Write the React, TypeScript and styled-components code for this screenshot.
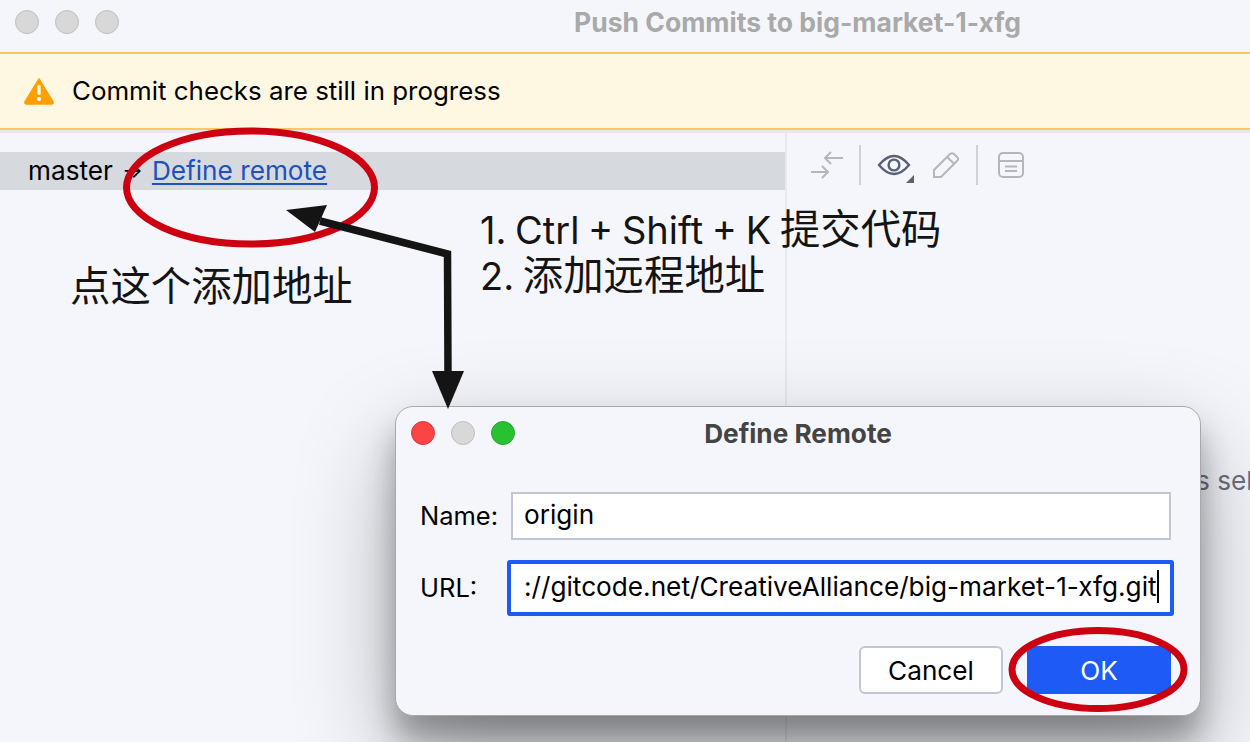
import styled, { createGlobalStyle } from "styled-components";

const GlobalStyle = createGlobalStyle`
  html, body {
    margin: 0;
    padding: 0;
    background: #f5f6fb;
  }
  * {
    box-sizing: border-box;
  }
`;

const App = () => {
  return (
    <>
      <GlobalStyle />
      <Page>
        <TitleBar>
          <Lights>
            <Light />
            <Light />
            <Light />
          </Lights>
          <WindowTitle>Push Commits to big-market-1-xfg</WindowTitle>
        </TitleBar>
        <Banner>
          <svg width="32" height="28" viewBox="0 0 32 28">
            <path
              d="M16 2 L30 25 Q30.5 27 28.5 27 L3.5 27 Q1.5 27 2 25 Z"
              fill="#ff9f00"
              stroke="#ff9f00"
              strokeWidth="1.5"
              strokeLinejoin="round"
            />
            <rect x="14.4" y="8" width="3.2" height="10" rx="1.4" fill="#fff" />
            <circle cx="16" cy="22" r="2" fill="#fff" />
          </svg>
          <BannerText>Commit checks are still in progress</BannerText>
        </Banner>
        <Strip />
        <Body>
          <BranchPanel>
            <BranchRow>
              <span>master</span>
              <BranchArrow>→</BranchArrow>
              <RemoteLink>Define remote</RemoteLink>
            </BranchRow>
          </BranchPanel>
          <DetailPanel>
            <Toolbar>
              <svg width="34" height="34" viewBox="0 0 34 34" fill="none" stroke="#b4b6bc" strokeWidth="2">
                <path d="M34 10 H16 M22 4 L16 10 L22 16" />
                <path d="M2 24 H19 M13 18 L19 24 L13 30" />
              </svg>
              <ToolDivider />
              <EyeWrap>
                <svg width="34" height="24" viewBox="0 0 34 24" fill="none" stroke="#5a5f73" strokeWidth="2.4">
                  <path d="M2 12 Q17 -6 32 12 Q17 30 2 12 Z" />
                  <circle cx="17" cy="12" r="5.4" />
                </svg>
                <EyeCorner />
              </EyeWrap>
              <svg width="28" height="28" viewBox="0 0 28 28" fill="none" stroke="#b4b6bc" strokeWidth="2">
                <path d="M2 26 V19 L18 3 Q20 1.5 22 3 L25.5 6.5 Q27 8.5 25 10 L9 26 Z" />
                <path d="M15 6 L22.5 13" />
              </svg>
              <ToolDivider />
              <PanelIcon width="26" height="26" viewBox="0 0 26 26" fill="none" stroke="#b4b6bc" strokeWidth="2">
                <rect x="1" y="1" width="24" height="24" rx="4" />
                <path d="M1 9 H25 M7 14.5 H19 M7 19 H19" />
              </PanelIcon>
            </Toolbar>
            <EmptyText>No commits selected</EmptyText>
          </DetailPanel>
        </Body>

        <Dialog>
          <DialogHead>
            <Lights>
              <Light $color="#fd4444" $edge="#e0383c" />
              <Light />
              <Light $color="#28c132" $edge="#22a82b" />
            </Lights>
            <DialogTitle>Define Remote</DialogTitle>
          </DialogHead>
          <Form>
            <FieldLabel>Name:</FieldLabel>
            <NameField>origin</NameField>
            <FieldLabel>URL:</FieldLabel>
            <UrlField>
              ://gitcode.net/CreativeAlliance/big-market-1-xfg.git
              <Caret />
            </UrlField>
          </Form>
          <Actions>
            <CancelButton>Cancel</CancelButton>
            <OkButton>OK</OkButton>
          </Actions>
        </Dialog>

        <Overlay width="1250" height="742" viewBox="0 0 1250 742">
          <g fill="none" stroke="#cc0010" strokeWidth="7">
            <ellipse cx="250.5" cy="187.5" rx="124" ry="56.5" />
            <ellipse cx="1098" cy="669.5" rx="86" ry="39" />
          </g>
          <path d="M320 221 L447.5 254 L448 375" fill="none" stroke="#141414" strokeWidth="7.5" />
          <path d="M286 210 L327 205 L315 232 Z" fill="#141414" />
          <path d="M432 371 L464 371 L448 409 Z" fill="#141414" />
        </Overlay>
        <Note $x={480} $y={207}>
          1. Ctrl + Shift + K <CjkRun>提交代码</CjkRun>
          <br />
          2. <CjkRun>添加远程地址</CjkRun>
        </Note>
        <Note $x={70} $y={264}>
          <CjkRun>点这个添加地址</CjkRun>
        </Note>
      </Page>
    </>
  );
};

export default App;

const Page = styled.div`
  position: relative;
  width: 1250px;
  height: 742px;
  overflow: hidden;
  display: flex;
  flex-direction: column;
  background: #f5f6fb;
  color: #000;
  font-family: Inter, "Liberation Sans", sans-serif;
`;

const TitleBar = styled.div`
  height: 52px;
  flex: none;
  display: flex;
  align-items: center;
  padding: 0 0 8px 15px;
`;

const Lights = styled.div`
  display: flex;
  gap: 16px;
`;

const Light = styled.span<{ $color?: string; $edge?: string }>`
  width: 24px;
  height: 24px;
  border-radius: 50%;
  background: ${(p) => p.$color ?? "#d8d8d8"};
  border: 1px solid ${(p) => p.$edge ?? "#bfbfbf"};
`;

const WindowTitle = styled.div`
  margin-left: 455px;
  font-size: 26.5px;
  font-weight: 700;
  color: #a9a9a9;
  white-space: nowrap;
`;

const Banner = styled.div`
  height: 78px;
  flex: none;
  display: flex;
  align-items: center;
  gap: 17px;
  padding: 0 0 0 23px;
  background: #fef8e3;
  border-top: 2px solid #fec85c;
  border-bottom: 2px solid #fec85c;
`;

const BannerText = styled.span`
  font-size: 25.9px;
  padding-bottom: 2px;
`;

const Strip = styled.div`
  height: 3px;
  flex: none;
  background: #e7e9ef;
`;

const Body = styled.div`
  flex: 1;
  display: flex;
  min-height: 0;
`;

const BranchPanel = styled.div`
  width: 785px;
  flex: none;
  padding-top: 19px;
`;

const BranchRow = styled.div`
  height: 38px;
  display: flex;
  align-items: center;
  padding: 0 0 2px 28px;
  background: #d6d9de;
  font-size: 26.2px;
`;

const BranchArrow = styled.span`
  width: 39px;
  text-align: center;
  font-size: 22px;
`;

const RemoteLink = styled.a`
  color: #2050bf;
  text-decoration: underline;
  text-underline-offset: 3px;
`;

const DetailPanel = styled.div`
  flex: 1;
  min-width: 0;
  border-left: 2px solid #e7e9ef;
  overflow: hidden;
`;

const Toolbar = styled.div`
  display: flex;
  align-items: center;
  gap: 16px;
  height: 40px;
  margin-top: 12px;
  padding-left: 22px;
`;

const ToolDivider = styled.span`
  width: 2px;
  height: 40px;
  background: #d0d1d6;
`;

const EyeWrap = styled.span`
  position: relative;
  display: flex;
  margin-right: 5px;
`;

const EyeCorner = styled.span`
  position: absolute;
  right: -3px;
  bottom: -6px;
  border-style: solid;
  border-width: 0 0 8px 8px;
  border-color: transparent transparent #5a5f73 transparent;
`;

const PanelIcon = styled.svg`
  margin-left: 4px;
`;

const EmptyText = styled.div`
  margin-top: 280px;
  margin-left: 275px;
  font-size: 26.2px;
  line-height: 32px;
  color: #6c707e;
  white-space: nowrap;
`;

const Dialog = styled.div`
  position: absolute;
  left: 395px;
  top: 406px;
  width: 806px;
  height: 310px;
  padding: 14px 29px 0 15px;
  display: flex;
  flex-direction: column;
  background: #f5f6fb;
  border: 1px solid #a9a9ad;
  border-radius: 18px;
  box-shadow: 0 40px 100px rgba(0, 0, 0, 0.3), 0 24px 30px rgba(0, 0, 0, 0.3);
`;

const DialogHead = styled.div`
  position: relative;
  height: 24px;
  flex: none;
  display: flex;
  align-items: center;
`;

const DialogTitle = styled.div`
  position: absolute;
  left: 0;
  right: -14px;
  text-align: center;
  font-size: 26.2px;
  font-weight: 700;
  color: #444;
`;

const Form = styled.div`
  display: grid;
  grid-template-columns: 87px 1fr;
  align-items: center;
  row-gap: 20px;
  margin-top: 47px;
  padding-left: 9px;
`;

const FieldLabel = styled.label`
  font-size: 25.5px;
  padding-bottom: 2px;
`;

const NameField = styled.div`
  height: 48px;
  margin-left: 4px;
  display: flex;
  align-items: center;
  padding: 0 0 3px 11px;
  background: #fff;
  border: 2px solid #c1c5d6;
  font-size: 26.2px;
`;

const UrlField = styled.div`
  height: 56px;
  margin-right: -3px;
  display: flex;
  align-items: center;
  padding: 0 0 3px 13px;
  background: #fff;
  border: 4px solid #1e5bf6;
  border-radius: 3px;
  font-size: 26.2px;
  white-space: nowrap;
  overflow: hidden;
`;

const Caret = styled.span`
  width: 2px;
  height: 33px;
  flex: none;
  background: #000;
`;

const Actions = styled.div`
  display: flex;
  justify-content: flex-end;
  gap: 24px;
  margin-top: 30px;
`;

const CancelButton = styled.button`
  width: 144px;
  height: 48px;
  padding: 0;
  background: #fff;
  border: 2px solid #c1c5d6;
  border-radius: 6px;
  color: #000;
  font: 26.2px Inter, "Liberation Sans", sans-serif;
`;

const OkButton = styled(CancelButton)`
  background: #1e5bf6;
  border-color: #1e5bf6;
  color: #fff;
`;

const Overlay = styled.svg`
  position: absolute;
  left: 0;
  top: 0;
  pointer-events: none;
`;

const Note = styled.div<{ $x: number; $y: number }>`
  position: absolute;
  left: ${(p) => p.$x}px;
  top: ${(p) => p.$y}px;
  font-family: Inter, "Noto Sans CJK SC", sans-serif;
  font-size: 38px;
  line-height: 46px;
  word-spacing: -2px;
  color: #141414;
  white-space: nowrap;
`;

const CjkRun = styled.span`
  font-size: 40.4px;
`;
